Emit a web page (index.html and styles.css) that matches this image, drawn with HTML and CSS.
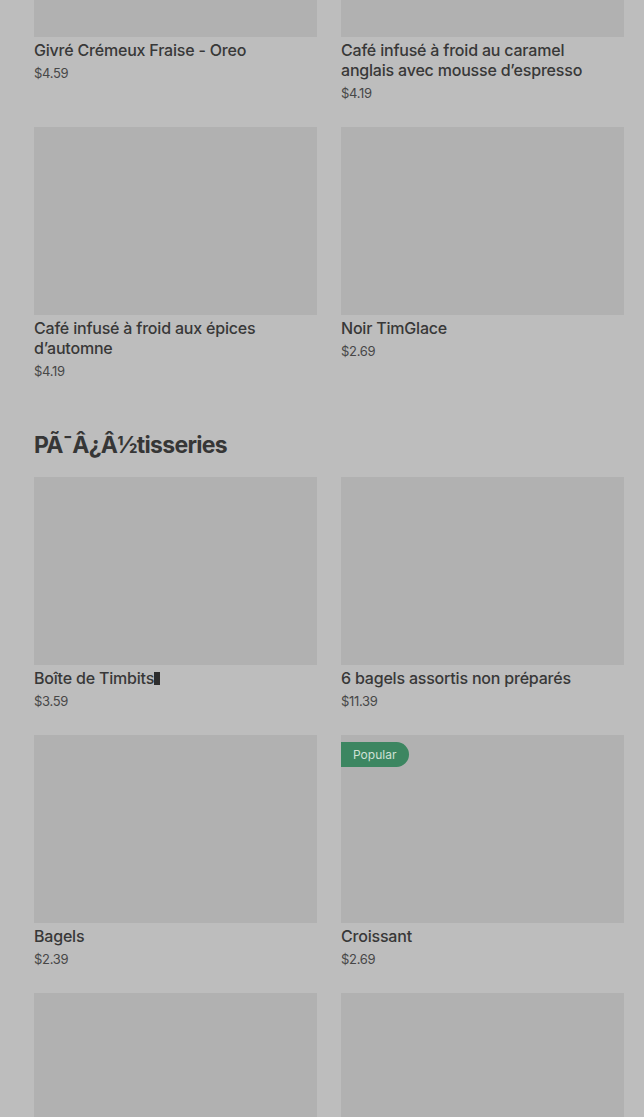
FILE: index.html
```html
<!DOCTYPE html>
<html lang="fr">
<head>
<meta charset="utf-8">
<title>Menu</title>
<link rel="stylesheet" href="styles.css">
</head>
<body>
<main class="page">
  <section class="section section--first">
    <div class="grid">
      <div class="card">
        <div class="card__img"></div>
        <div class="card__title">Givré Crémeux Fraise - Oreo</div>
        <div class="card__price">$4.59</div>
      </div>
      <div class="card">
        <div class="card__img"></div>
        <div class="card__title">Café infusé à froid au caramel anglais avec mousse d’espresso</div>
        <div class="card__price">$4.19</div>
      </div>
      <div class="card">
        <div class="card__img"></div>
        <div class="card__title">Café infusé à froid aux épices d’automne</div>
        <div class="card__price">$4.19</div>
      </div>
      <div class="card">
        <div class="card__img"></div>
        <div class="card__title">Noir TimGlace</div>
        <div class="card__price">$2.69</div>
      </div>
    </div>
  </section>
  <section class="section">
    <h2 class="section__title">PÃ¯Â¿Â½tisseries</h2>
    <div class="grid">
      <div class="card">
        <div class="card__img"></div>
        <div class="card__title">Boîte de Timbits<span class="cursor"></span></div>
        <div class="card__price">$3.59</div>
      </div>
      <div class="card">
        <div class="card__img"></div>
        <div class="card__title">6 bagels assortis non préparés</div>
        <div class="card__price">$11.39</div>
      </div>
      <div class="card">
        <div class="card__img"></div>
        <div class="card__title">Bagels</div>
        <div class="card__price">$2.39</div>
      </div>
      <div class="card">
        <div class="card__img"><span class="badge">Popular</span></div>
        <div class="card__title">Croissant</div>
        <div class="card__price">$2.69</div>
      </div>
      <div class="card">
        <div class="card__img"></div>
      </div>
      <div class="card">
        <div class="card__img"></div>
      </div>
    </div>
  </section>
</main>
</body>
</html>
```
FILE: styles.css
```css
html, body {
  margin: 0;
  padding: 0;
  background: #bdbdbd;
  overflow: hidden;
}
body {
  font-family: "Inter", "Roboto", "Liberation Sans", sans-serif;
  color: #393939;
}
.page {
  padding: 0 20px 0 34px;
}
.section--first {
  margin-top: -151px;
}
.grid {
  display: grid;
  grid-template-columns: 283px 283px;
  column-gap: 24px;
  row-gap: 25px;
}
.card__img {
  position: relative;
  height: 188px;
  background: #b1b1b1;
}
.card__title {
  margin-top: 3px;
  padding-right: 16px;
  font-size: 16px;
  line-height: 20px;
  font-weight: 500;
  color: #383838;
  letter-spacing: -0.2px;
}
.card__price {
  margin-top: 4px;
  font-size: 13px;
  line-height: 18px;
  color: #474747;
  letter-spacing: -0.3px;
}
.section__title {
  margin: 49px 0 16px;
  font-size: 23px;
  line-height: 32px;
  font-weight: 700;
  color: #363636;
  letter-spacing: -0.7px;
}
.cursor {
  display: inline-block;
  width: 6px;
  height: 13px;
  background: #2e2e2e;
  vertical-align: -1px;
}
.badge {
  position: absolute;
  top: 7px;
  left: 0;
  height: 25px;
  line-height: 25px;
  padding: 0 13px 0 12px;
  border-radius: 0 13px 13px 0;
  background: #3c8661;
  color: #cfe1d6;
  font-size: 12px;
  font-weight: 400;
}
```
